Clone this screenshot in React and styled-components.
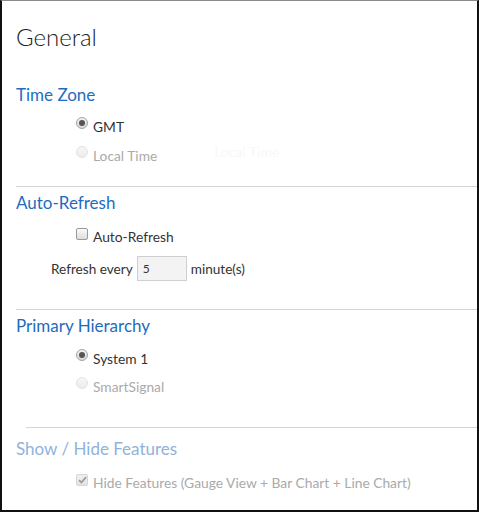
import styled, { createGlobalStyle, css } from 'styled-components';

const GlobalStyle = createGlobalStyle`
  html, body {
    margin: 0;
    padding: 0;
    background: #fff;
  }
  body {
    font-family: Lato, "Liberation Sans", sans-serif;
    color: #333;
  }
  * {
    box-sizing: border-box;
  }
`;

const Panel = styled.div`
  width: 479px;
  height: 512px;
  border-left: 2px solid #111;
  border-right: 2px solid #111;
  border-bottom: 2px solid #111;
  border-top: 1px solid #8a8a8a;
  overflow: hidden;
  display: flex;
  flex-direction: column;
`;

const Title = styled.h1`
  margin: 21px 0 0 14px;
  font-size: 24px;
  font-weight: 300;
  line-height: 30px;
  color: #222;
`;

const Section = styled.section`
  display: flex;
  flex-direction: column;
`;

const Heading = styled.h2`
  margin: 0 0 0 14px;
  font-size: 17px;
  font-weight: 400;
  line-height: 22px;
  color: ${(p) => (p.$disabled ? '#8fb2dc' : '#1e6cc0')};
`;

const Divider = styled.hr`
  margin: 0 0 0 ${(p) => p.$indent || 14}px;
  border: 0;
  border-top: 1px solid #d4d4d4;
  height: 0;
`;

const Options = styled.div`
  display: flex;
  flex-direction: column;
  gap: ${(p) => p.$gap || 10}px;
  padding-left: 74px;
`;

const Option = styled.label`
  display: flex;
  align-items: center;
  gap: 5px;
  font-size: 13.8px;
  line-height: 19px;
  color: ${(p) => (p.$disabled ? '#aaa' : '#333')};
`;

const Radio = styled.span`
  width: 12px;
  height: 12px;
  border-radius: 50%;
  flex: none;
  margin-top: -8px;
  position: relative;
  ${(p) =>
    p.$disabled
      ? css`
          border: 1px solid #e2e2e2;
          background: linear-gradient(#f6f6f6, #ececec);
        `
      : css`
          border: 1px solid #a4a4a4;
          background: linear-gradient(#f2f2f2, #d8d8d8);
        `}
  ${(p) =>
    p.$checked &&
    css`
      &::after {
        content: '';
        position: absolute;
        left: 2px;
        top: 2px;
        width: 6px;
        height: 6px;
        border-radius: 50%;
        background: #555;
      }
    `}
`;

const Box = styled.span`
  width: 12px;
  height: 12px;
  border-radius: 2px;
  flex: none;
  margin-top: -6px;
  display: flex;
  align-items: center;
  justify-content: center;
  border: 1px solid ${(p) => (p.$disabled ? '#d6d6d6' : '#9a9a9a')};
  background: ${(p) =>
    p.$disabled ? 'linear-gradient(#f0f0f0, #e4e4e4)' : 'linear-gradient(#fafafa, #dedede)'};
`;

const Ghost = styled.span`
  margin-left: 52px;
  margin-top: -8px;
  color: #f8f8f8;
  font-size: 14px;
`;

const RefreshRow = styled.div`
  display: flex;
  align-items: center;
  gap: 4px;
  padding-left: 49px;
  font-size: 13.6px;
  color: #333;
`;

const NumberInput = styled.div`
  width: 50px;
  height: 25px;
  border: 1px solid #cfcfcf;
  background: #f3f3f3;
  font-size: 12px;
  line-height: 23px;
  padding-left: 5px;
  color: #333;
`;

function RadioOption({ label, checked, disabled, children }) {
  return (
    <Option $disabled={disabled}>
      <Radio $checked={checked} $disabled={disabled} />
      {label}
      {children}
    </Option>
  );
}

function CheckOption({ label, checked, disabled }) {
  return (
    <Option $disabled={disabled}>
      <Box $disabled={disabled}>
        {checked && (
          <svg width="9" height="8" viewBox="0 0 9 8">
            <path d="M1 4.2 L3.4 6.5 L8 1.2" fill="none" stroke="#9c9c9c" strokeWidth="1.8" />
          </svg>
        )}
      </Box>
      {label}
    </Option>
  );
}

export default function App() {
  return (
    <>
      <GlobalStyle />
      <Panel>
        <Title>General</Title>

        <Section style={{ marginTop: 32 }}>
          <Heading>Time Zone</Heading>
          <Options style={{ marginTop: 11 }} $gap={10}>
            <RadioOption label="GMT" checked />
            <RadioOption label="Local Time" disabled>
              <Ghost>Local Time</Ghost>
            </RadioOption>
          </Options>
        </Section>

        <Divider style={{ marginTop: 21 }} />

        <Section style={{ marginTop: 5 }}>
          <Heading>Auto-Refresh</Heading>
          <Options style={{ marginTop: 13 }}>
            <CheckOption label="Auto-Refresh" />
          </Options>
          <RefreshRow style={{ marginTop: 10 }}>
            Refresh every
            <NumberInput>5</NumberInput>
            minute(s)
          </RefreshRow>
        </Section>

        <Divider style={{ marginTop: 28 }} />

        <Section style={{ marginTop: 5 }}>
          <Heading>Primary Hierarchy</Heading>
          <Options style={{ marginTop: 12 }} $gap={9}>
            <RadioOption label="System 1" checked />
            <RadioOption label="SmartSignal" disabled />
          </Options>
        </Section>

        <Divider style={{ marginTop: 31 }} $indent={24} />

        <Section style={{ marginTop: 10 }}>
          <Heading $disabled>Show / Hide Features</Heading>
          <Options style={{ marginTop: 13 }}>
            <CheckOption label="Hide Features (Gauge View + Bar Chart + Line Chart)" checked disabled />
          </Options>
        </Section>
      </Panel>
    </>
  );
}
